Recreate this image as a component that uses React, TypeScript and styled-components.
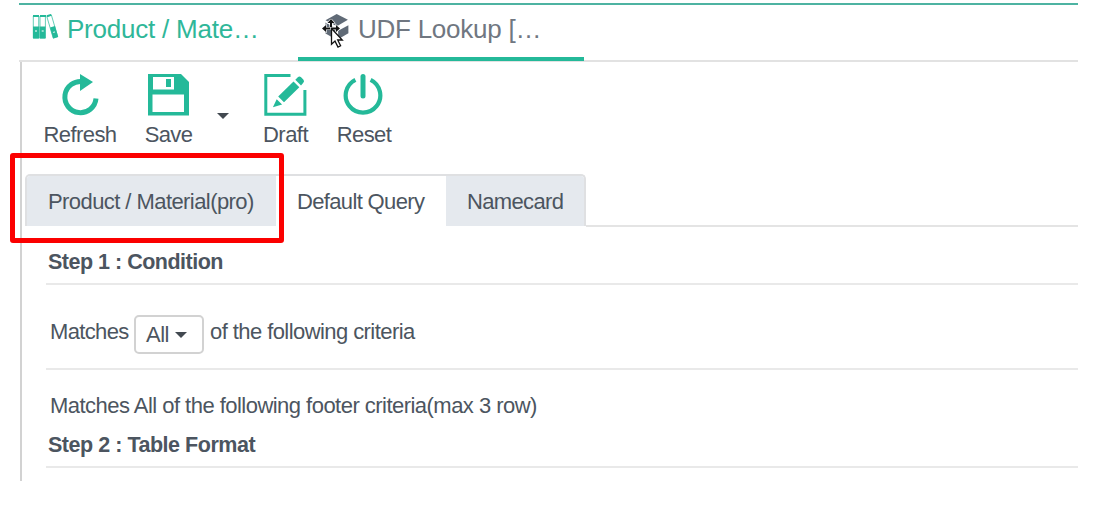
import React from 'react';
import styled, { createGlobalStyle } from 'styled-components';

const GlobalStyle = createGlobalStyle`
  * { box-sizing: border-box; }
  body {
    margin: 0;
    background: #fff;
    color: #4c5560;
    font-family: "Liberation Sans", Arial, sans-serif;
    font-size: 22px;
    line-height: 24px;
  }
`;

const GREEN = '#24b999';

const Page = styled.div`
  position: relative;
  width: 1097px;
  height: 507px;
  padding: 3px 19px 0;
  overflow: hidden;
`;

const TopTabs = styled.nav`
  display: flex;
  height: 59px;
  width: 1059px;
  border-top: 2px solid #4db3a2;
  border-bottom: 2px solid #e2e2e2;
`;

const TopTab = styled.div<{ $active?: boolean; $width: number; $indent: number }>`
  display: flex;
  align-items: flex-start;
  width: ${(p) => p.$width}px;
  height: 56px;
  padding: 9px 0 0 ${(p) => p.$indent}px;
  border-bottom: ${(p) => (p.$active ? `4px solid ${GREEN}` : '0')};
  color: ${(p) => (p.$active ? '#707781' : '#2fb799')};
  svg { flex: none; }
`;

const TopTitle = styled.span<{ $gap: number; $spacing: number }>`
  margin-left: ${(p) => p.$gap}px;
  font-size: 26px;
  line-height: 30px;
  letter-spacing: ${(p) => p.$spacing}px;
  white-space: nowrap;
`;

const Panel = styled.main`
  height: 419px;
  width: 1058px;
  margin-left: 1px;
  border-left: 2px solid #d2d2d2;
`;

const Toolbar = styled.div`
  display: flex;
  height: 112px;
  padding: 12px 0 0 22px;
`;

const Tool = styled.button<{ $width: number; $after: number }>`
  display: flex;
  flex-direction: column;
  align-items: center;
  width: ${(p) => p.$width}px;
  height: 74px;
  margin: 0 ${(p) => p.$after}px 0 0;
  padding: 0;
  border: 0;
  background: none;
  color: inherit;
  font: inherit;
  svg { flex: none; }
`;

const ToolLabel = styled.span<{ $spacing: number }>`
  margin-top: 6px;
  letter-spacing: ${(p) => p.$spacing}px;
  white-space: nowrap;
`;

const Caret = styled.i`
  flex: none;
  width: 0;
  height: 0;
  border: 6px solid transparent;
  border-top-color: #424950;
  border-bottom: 0;
`;

const SaveMenu = styled.div`
  display: flex;
  width: 47px;
  padding-top: 39px;
`;

const SubTabs = styled.div`
  display: flex;
  height: 53px;
  padding-left: 3px;
`;

const SubTabGroup = styled.div`
  display: flex;
  width: 561px;
  height: 52px;
  overflow: hidden;
  border: 2px solid #dfe0e2;
  border-bottom: 0;
  border-radius: 5px 5px 0 0;
`;

const SubTab = styled.div<{ $selected?: boolean; $width: number; $spacing: number }>`
  flex: none;
  width: ${(p) => p.$width}px;
  padding: 14px 0 0 21px;
  background: ${(p) => (p.$selected ? '#fff' : '#e5e9ee')};
  letter-spacing: ${(p) => p.$spacing}px;
  white-space: nowrap;
`;

const SubTabRest = styled.div`
  flex: 1;
  border-bottom: 2px solid #e4e4e4;
`;

const Section = styled.section<{ $height: number; $top: number; $left: number }>`
  height: ${(p) => p.$height}px;
  margin-left: 24px;
  padding: ${(p) => p.$top}px 0 0 ${(p) => p.$left}px;
  border-bottom: 2px solid #e9e9e9;
`;

const Heading = styled.h2<{ $spacing: number }>`
  margin: 0;
  font-size: 21.5px;
  line-height: 24px;
  letter-spacing: ${(p) => p.$spacing}px;
`;

const Criteria = styled.div`
  display: flex;
  align-items: flex-start;
`;

const FooterCriteria = styled(Criteria)`
  height: 39px;
  padding-left: 2px;
`;

const Text = styled.div<{ $top?: number; $spacing: number; $width?: number }>`
  width: ${(p) => (p.$width ? `${p.$width}px` : 'auto')};
  padding-top: ${(p) => p.$top ?? 0}px;
  letter-spacing: ${(p) => p.$spacing}px;
  white-space: nowrap;
`;

const Select = styled.button`
  display: flex;
  align-items: center;
  justify-content: space-between;
  width: 70px;
  height: 39px;
  margin-right: 6px;
  padding: 0 15px 0 10px;
  border: 2px solid #d2d2d2;
  border-radius: 5px;
  background: #fff;
  color: inherit;
  font: inherit;
  letter-spacing: -0.5px;
`;

const Highlight = styled.div`
  position: absolute;
  left: 10px;
  top: 153px;
  width: 274px;
  height: 90px;
  border: 5px solid #fb0000;
  border-radius: 3px;
`;

const Pointer = styled.svg`
  position: absolute;
  left: 322px;
  top: 19px;
`;

const BooksIcon = () => (
  <svg width="27" height="27" viewBox="0 0 27 27" fill="none" stroke={GREEN}>
    <path d="M1.3 2h5.4v22H1.3zM8 2h5.4v22H8zM14.8 2.5l4.6-1.4 6.3 21.5-4.5 1.5z" strokeWidth="1" strokeOpacity=".7" />
    <path d="M1 12.500h6v12H1zM7.500 12.500h6v12h-6zM18 13.500l5-1.500 3.200 11-5 1.500z" fill={GREEN} stroke="none" />
    <path d="M3 17h2M9.700 17h2M21 18.500l2-.6" stroke="#fff" strokeOpacity=".7" strokeWidth="1.300" />
    <path d="M1 2h6M8 2h6M14.800 2.200l4.500-1.300" strokeWidth="2" />
  </svg>
);

const CubeIcon = () => (
  <svg width="26" height="27" viewBox="0 0 26 27" fill="#606a76">
    <path d="M1.500 6.300 12.700 0l11.200 5.800-11 6.400z" />
    <path d="M1.500 8.500l10.200 5.800v11L1.500 19.500z" />
    <path d="M24.400 11.300v7.900l-10.300 6v-8.400z" />
  </svg>
);

const RefreshIcon = () => (
  <svg width="42" height="43" viewBox="0 0 42 43">
    <path d="M24 7.700A15.600 15.600 0 1 0 37 24.500" fill="none" stroke={GREEN} strokeWidth="5" />
    <path d="M21 0v17l13-9z" fill={GREEN} />
  </svg>
);

const SaveIcon = () => (
  <svg width="43" height="43" viewBox="0 0 43 43" fill={GREEN}>
    <path fillRule="evenodd" d="M1 0h33l8 8v33.500H1zM6 3v12.500h21V3zM5.500 20.500v17.500h31.500V20.500z" />
    <path d="M19 5h5v8H19z" />
  </svg>
);

const DraftIcon = () => (
  <svg width="43" height="43" viewBox="0 0 43 43">
    <path d="M26.500 1.600H1.800v38.600h39.100V16" fill="none" stroke={GREEN} strokeWidth="3" />
    <path d="M29.500 7.500l5.800 5.800L20 28.300 14.200 22.500zM31.300 5.800l2.500-2.600q1.600-1.400 3.300 0l2.200 2.200q1.600 1.700 0 3.400L37 11.500zM12.700 25.200l5.400 5.300-9.200 2.800z" fill={GREEN} />
  </svg>
);

const PowerIcon = () => (
  <svg width="42" height="43" viewBox="0 0 42 43" fill="none" stroke={GREEN}>
    <path d="M12.400 5.800A17.300 17.300 0 1 0 27.600 5.800" strokeWidth="4.200" />
    <path d="M20 2.600v19.500" strokeWidth="5" strokeLinecap="round" />
  </svg>
);

const App = () => (
  <>
    <GlobalStyle />
    <Page>
      <TopTabs>
        <TopTab $width={279} $indent={13}>
          <BooksIcon />
          <TopTitle $gap={8} $spacing={-0.22}>Product / Mate…</TopTitle>
        </TopTab>
        <TopTab $active $width={286} $indent={26}>
          <CubeIcon />
          <TopTitle $gap={8} $spacing={-0.25}>UDF Lookup […</TopTitle>
        </TopTab>
      </TopTabs>
      <Panel>
        <Toolbar>
          <Tool $width={72} $after={29}><RefreshIcon /><ToolLabel $spacing={-0.6}>Refresh</ToolLabel></Tool>
          <Tool $width={47} $after={25}><SaveIcon /><ToolLabel $spacing={-0.7}>Save</ToolLabel></Tool>
          <SaveMenu><Caret /></SaveMenu>
          <Tool $width={43} $after={30}><DraftIcon /><ToolLabel $spacing={-0.55}>Draft</ToolLabel></Tool>
          <Tool $width={54} $after={0}><PowerIcon /><ToolLabel $spacing={-0.55}>Reset</ToolLabel></Tool>
        </Toolbar>
        <SubTabs>
          <SubTabGroup>
            <SubTab $width={249} $spacing={-0.57}>Product / Material(pro)</SubTab>
            <SubTab $selected $width={170} $spacing={-0.65}>Default Query</SubTab>
            <SubTab $width={140} $spacing={-0.65}>Namecard</SubTab>
          </SubTabGroup>
          <SubTabRest />
        </SubTabs>
        <Section $height={58} $top={23} $left={2}>
          <Heading $spacing={-0.5}>Step 1 : Condition</Heading>
        </Section>
        <Section $height={85} $top={30} $left={4}>
          <Criteria>
            <Text $top={5} $width={84} $spacing={-0.65}>Matches</Text>
            <Select>All<Caret /></Select>
            <Text $top={5} $spacing={-0.57}>of the following criteria</Text>
          </Criteria>
        </Section>
        <Section $height={98} $top={24} $left={2}>
          <FooterCriteria><Text $spacing={-0.53}>Matches All of the following footer criteria(max 3 row)</Text></FooterCriteria>
          <Heading $spacing={-0.47}>Step 2 : Table Format</Heading>
        </Section>
      </Panel>
      <Highlight />
      <Pointer width="24" height="30" viewBox="0 0 24 30">
        <path d="M9 0l3.5 4H10v4H8V4H5.5zM0 9.500l4-3.500v2.500h4v2H4V13zM18 9.500l-4-3.500v2.500h-4v2h4V13z" fill="#111" stroke="#fff" strokeWidth="1.200" paintOrder="stroke" />
        <path d="M9.500 9.500v15.800l3.500-3.200 3 6 2.600-1.300-2.900-5.800h4.600z" fill="#fff" stroke="#111" strokeWidth="1.300" />
      </Pointer>
    </Page>
  </>
);

export default App;
